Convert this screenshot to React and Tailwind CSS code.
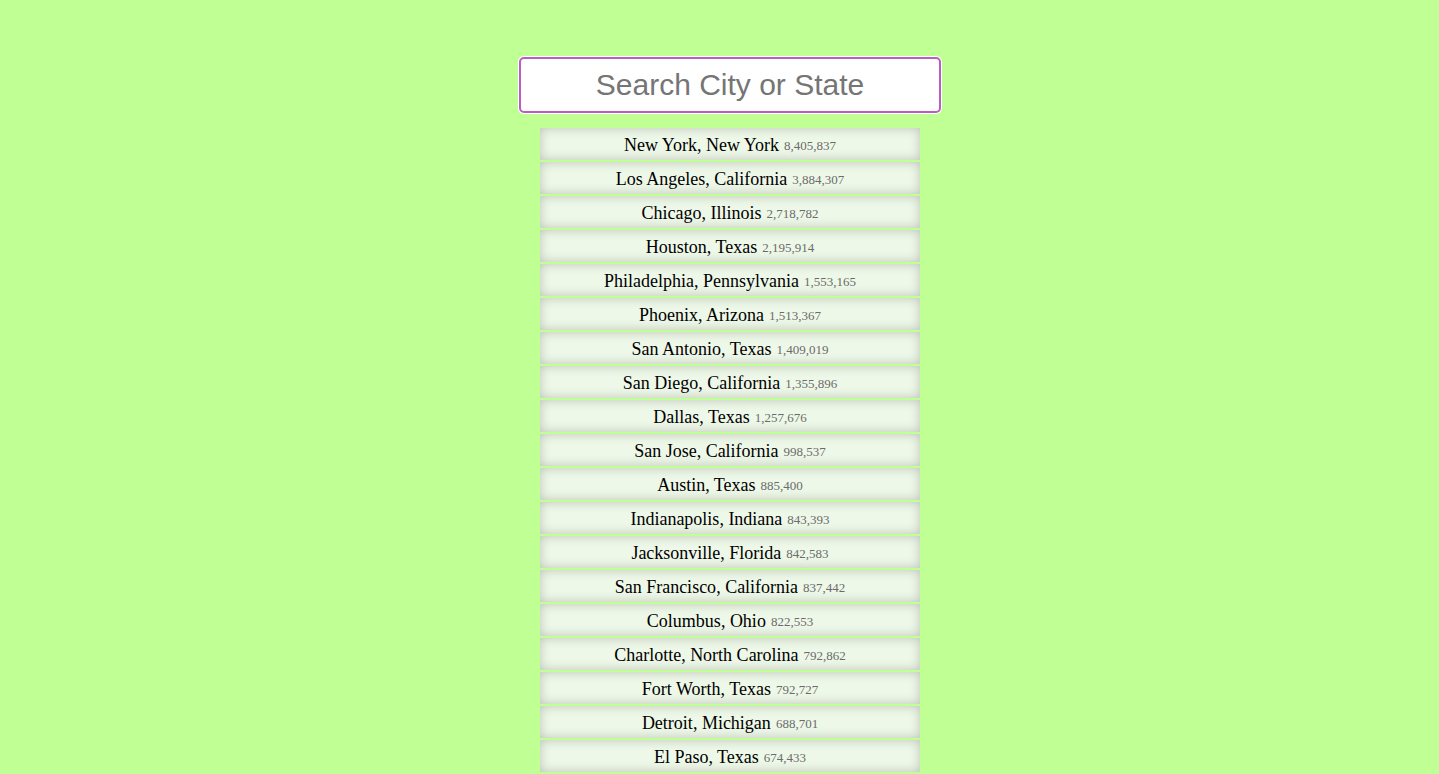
import React from "react";

const cities = [
  ["New York", "New York", "8,405,837"],
  ["Los Angeles", "California", "3,884,307"],
  ["Chicago", "Illinois", "2,718,782"],
  ["Houston", "Texas", "2,195,914"],
  ["Philadelphia", "Pennsylvania", "1,553,165"],
  ["Phoenix", "Arizona", "1,513,367"],
  ["San Antonio", "Texas", "1,409,019"],
  ["San Diego", "California", "1,355,896"],
  ["Dallas", "Texas", "1,257,676"],
  ["San Jose", "California", "998,537"],
  ["Austin", "Texas", "885,400"],
  ["Indianapolis", "Indiana", "843,393"],
  ["Jacksonville", "Florida", "842,583"],
  ["San Francisco", "California", "837,442"],
  ["Columbus", "Ohio", "822,553"],
  ["Charlotte", "North Carolina", "792,862"],
  ["Fort Worth", "Texas", "792,727"],
  ["Detroit", "Michigan", "688,701"],
  ["El Paso", "Texas", "674,433"],
];

export default function App() {
  return (
    <div className="min-h-screen bg-[#c0ff94] flex justify-center pl-[21px]">
      <div className="flex flex-col items-center pt-[56px]">
        <div className="w-[424px] h-[58px] rounded-[6px] bg-white p-[1px]">
          <input
            type="text"
            placeholder="Search City or State"
            className="w-full h-full rounded-[5px] border-2 border-[#bb5cc0] bg-white text-center text-[30px] text-black placeholder:text-[#757575] outline-none"
            style={{ fontFamily: '"Liberation Sans", Arial, sans-serif' }}
          />
        </div>
        <ul className="mt-[14px] w-[380px] flex flex-col gap-[2px]">
          {cities.map(([c, s, p]) => (
            <li
              key={c + s}
              className="h-[32px] pt-[2px] bg-[#eef8e8] shadow-[inset_0_0_11px_rgba(0,0,0,0.22)] flex items-center justify-center text-[18px] text-black"
              style={{ fontFamily: '"Liberation Serif", "Times New Roman", serif' }}
            >
              <span>
                {c}, {s}
              </span>
              <span className="ml-[5px] text-[13px] text-[#6b6b6b] relative top-[1px]">{p}</span>
            </li>
          ))}
        </ul>
      </div>
    </div>
  );
}
